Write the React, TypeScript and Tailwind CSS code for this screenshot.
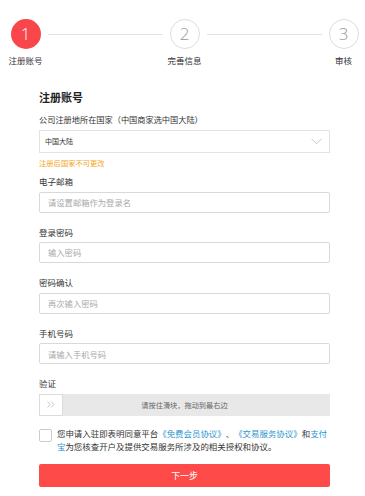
import React from 'react'

const cjk = { fontFamily: '"Noto Sans CJK SC", "Noto Sans", sans-serif' }

const steps = [
  { n: '1', label: '注册账号', active: true },
  { n: '2', label: '完善信息', active: false },
  { n: '3', label: '审核', active: false },
]

function Step({ n, label, active }: { n: string; label: string; active: boolean }) {
  return (
    <div className="flex w-[36px] flex-col items-center">
      <div
        className={`flex h-[30px] w-[30px] items-center justify-center rounded-full text-[17px] font-light ${
          active ? 'bg-[#f9464a] text-white' : 'border border-[#dddddd] bg-white text-[#999999]'
        }`}
        style={{ fontFamily: '"Open Sans", "Liberation Sans", sans-serif' }}
      >
        {n}
      </div>
      <div className="mt-[5px] whitespace-nowrap text-[8.5px] leading-[12px] text-[#333333]">{label}</div>
    </div>
  )
}

function Field({ label, placeholder }: { label: string; placeholder: string }) {
  return (
    <div className="mt-[13px]">
      <div className="mb-[4.6px] h-[12px] text-[8.5px] leading-[12px] text-[#333333]">{label}</div>
      <div className="flex h-[21px] items-center rounded-[2px] border border-[#d9d9d9] bg-white pl-[8px]">
        <span className="text-[8.3px] text-[#aaaaaa]">{placeholder}</span>
      </div>
    </div>
  )
}

export default function App() {
  return (
    <div className="min-h-[496px] w-[365px] bg-white [text-spacing-trim:space-all]" style={cjk}>
      {/* steps */}
      <div className="flex items-start pl-[7.5px] pr-[3.5px] pt-[19px]">
        <Step {...steps[0]} />
        <div className="mx-[4px] mt-[15px] h-px flex-1 bg-[#e3e3e3]" />
        <Step {...steps[1]} />
        <div className="mx-[4px] mt-[15px] h-px flex-1 bg-[#e3e3e3]" />
        <Step {...steps[2]} />
      </div>

      <div className="ml-[39px] w-[291px]">
        <h1 className="mt-[24px] text-[11px] font-bold leading-[14px] text-[#222222]">注册账号</h1>

        <div className="mt-[9px] text-[8.2px] leading-[12px] text-[#333333]">公司注册地所在国家（中国商家选中国大陆）</div>
        <div className="mt-[5px] flex h-[23px] items-center justify-between border border-[#e3e3e3] bg-white pl-[5px] pr-[7px]">
          <span className="text-[7px] text-[#333333]">中国大陆</span>
          <svg width="11" height="7" viewBox="0 0 11 7" fill="none">
            <polyline points="0.5,0.8 5.5,5.8 10.5,0.8" stroke="#c4c4c4" strokeWidth="0.9" />
          </svg>
        </div>
        <div className="mt-[5px] text-[7.3px] leading-[10px] text-[#f5a623]">注册后国家不可更改</div>

        <div className="-mt-[6px]">
          <Field label="电子邮箱" placeholder="请设置邮箱作为登录名" />
          <Field label="登录密码" placeholder="输入密码" />
          <Field label="密码确认" placeholder="再次输入密码" />
          <Field label="手机号码" placeholder="请输入手机号码" />
        </div>

        <div className="mt-[13px] mb-[4.6px] h-[12px] text-[8.5px] leading-[12px] text-[#333333]">验证</div>
        <div className="flex h-[22px] bg-[#e8e8e8]">
          <div className="flex w-[24px] items-center justify-center border border-[#dcdcdc] bg-white">
            <svg width="8" height="7" viewBox="0 0 8 7" fill="none">
              <polyline points="0.6,0.6 3.3,3.5 0.6,6.4" stroke="#b8b8b8" strokeWidth="0.8" />
              <polyline points="4.2,0.6 6.9,3.5 4.2,6.4" stroke="#b8b8b8" strokeWidth="0.8" />
            </svg>
          </div>
          <div className="flex flex-1 items-center justify-center pr-[24px] text-[7.2px] text-[#666666]">
            请按住滑块，拖动到最右边
          </div>
        </div>

        <div className="mt-[11.5px] flex items-start">
          <div className="mt-[1.5px] h-[13px] w-[13px] shrink-0 rounded-[2px] border border-[#cccccc] bg-white" />
          <p className="ml-[5px] text-[8.45px] leading-[13px] text-[#333333]">
            您申请入驻即表明同意平台<span className="text-[#2b95cf]">《免费会员协议》</span>、<span className="text-[#2b95cf]">《交易服务协议》</span>和<span className="text-[#2b95cf]">支付</span>
            <br />
            <span className="text-[#2b95cf]">宝</span>为您核查开户及提供交易服务所涉及的相关授权和协议。
          </p>
        </div>

        <button className="mt-[10.5px] flex h-[23px] w-full items-center justify-center rounded-[2px] bg-[#ff4a4a] text-[8.9px] text-white">
          下一步
        </button>
      </div>
    </div>
  )
}
